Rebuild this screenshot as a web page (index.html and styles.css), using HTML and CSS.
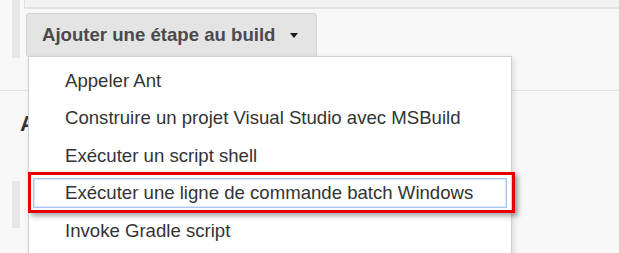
FILE: index.html
```html
<!DOCTYPE html>
<html lang="fr">
<head>
  <meta charset="UTF-8">
  <title>Ajouter une étape au build</title>
  <link rel="stylesheet" href="styles.css">
</head>
<body>
<div class="page">

  <div class="section section-build">
    <div class="rail rail-top"></div>
    <div class="section-body">
      <div class="prev-step"></div>
      <button class="add-step-btn" type="button">
        Ajouter une étape au build
        <span class="caret"></span>
      </button>
    </div>
  </div>

  <div class="section section-post">
    <h2 class="section-title">Actions à la suite du build</h2>
    <div class="rail rail-bottom"></div>
  </div>

  <!-- menu ouvert -->
  <ul class="step-menu">
    <li class="step-item">Appeler Ant</li>
    <li class="step-item">Construire un projet Visual Studio avec MSBuild</li>
    <li class="step-item">Exécuter un script shell</li>
    <li class="step-item is-focused"><span class="focus-ring">Exécuter une ligne de commande batch Windows</span></li>
    <li class="step-item">Invoke Gradle script</li>
  </ul>

</div>
</body>
</html>
```

FILE: styles.css
```css
body {
  margin: 0;
  font-family: "Liberation Sans", Arial, sans-serif;
  background-color: #f8f8f8;
}

.page {
  position: relative;
  height: 253px;
  overflow: hidden;
}

.section-build {
  display: flex;
  height: 91px;
  padding-left: 12px;
  border-bottom: 1px solid #e2e2e2;
  box-sizing: border-box;
}

.rail {
  width: 8px;
  background-color: #e6e6e6;
}

.rail-top {
  height: 58px;
}

.section-body {
  flex: 1;
  margin-left: 4px;
}

.prev-step {
  height: 7px;
  background-color: #f3f3f3;
  border-left: 1px solid #e0e0e0;
  border-bottom: 2px solid #e2e2e2;
}

.add-step-btn {
  display: flex;
  align-items: center;
  margin: 4px 0 0 2px;
  height: 44px;
  width: 291px;
  padding: 0 0 0 15px;
  background-color: #e4e4e4;
  border: 1px solid #d2d2d2;
  border-radius: 3px;
  font-family: inherit;
  font-size: 18.6px;
  font-weight: bold;
  color: #4a4a4a;
  cursor: pointer;
}

.caret {
  margin-left: 15px;
  width: 0;
  height: 0;
  border-left: 4px solid transparent;
  border-right: 4px solid transparent;
  border-top: 5px solid #1a1a1a;
}

.section-post {
  padding: 20px 0 0 12px;
}

.section-title {
  margin: 0 0 44px 8px;
  font-size: 22px;
  font-weight: bold;
  color: #333;
  white-space: nowrap;
}

.rail-bottom {
  height: 47px;
}

.step-menu {
  position: absolute;
  left: 28px;
  top: 56px;
  width: 484px;
  height: 210px;
  margin: 0;
  padding: 4.75px 0 0;
  list-style: none;
  background-color: #fff;
  border: 1px solid #cfcfcf;
  box-shadow: 2px 2px 6px rgba(0, 0, 0, 0.12);
  box-sizing: border-box;
}

.step-item {
  height: 37.5px;
  line-height: 37.5px;
  padding-left: 36px;
  font-size: 18.6px;
  color: #333;
  white-space: nowrap;
}

.step-item.is-focused {
  position: relative;
  display: flex;
  align-items: center;
  padding: 0 4px;
}

.focus-ring {
  flex: 1;
  height: 30px;
  line-height: 28px;
  padding-left: 31px;
  border: 1px solid #a7c7f0;
  box-shadow: inset 0 0 0 1px #dbe8fb;
  box-sizing: border-box;
}

/* annotation rouge */
.step-item.is-focused::after {
  content: "";
  position: absolute;
  left: -1px;
  right: -4px;
  top: -2px;
  height: 41px;
  border: 3px solid #e60000;
  box-sizing: border-box;
  box-shadow: 3px 3px 5px rgba(0, 0, 0, 0.35);
}
```
